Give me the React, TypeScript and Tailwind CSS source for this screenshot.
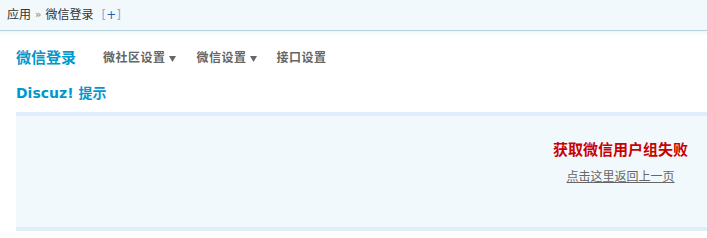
import React from "react";

const cjk = { fontFamily: '"DejaVu Sans", "Noto Sans CJK SC", sans-serif' };

function Arrow() {
  return (
    <svg width="7" height="6" viewBox="0 0 7 6" className="ml-[3px] mt-[1px]">
      <polygon points="0,0 7,0 3.5,6" fill="#666" />
    </svg>
  );
}

export default function App() {
  return (
    <div className="w-[707px] h-[238px] bg-white overflow-hidden" style={cjk}>
      <div className="h-[31px] bg-[#F2F9FD] border-b border-[#B7D2DC] flex items-center pl-[7px] text-[12px] text-[#333] leading-none">
        <span>应用</span>
        <span className="mx-[4px] text-[10px] text-[#B59B6B] font-bold">»</span>
        <span>微信登录</span>
        <span className="ml-[8px] text-[#2366A8]">
          <span className="text-[#99A4D8]">[</span>+<span className="text-[#99A4D8]">]</span>
        </span>
      </div>
      <div className="h-[5px] bg-gradient-to-b from-[#EEF6FA] to-white" />
      <div className="flex items-center pl-[16px] mt-[12px] h-[20px]">
        <span className="text-[15px] font-bold text-[#0099CC] leading-none">微信登录</span>
        <span className="ml-[27px] flex items-center text-[12px] tracking-[0.5px] font-bold text-[#666] leading-none">
          微社区设置<Arrow />
        </span>
        <span className="ml-[21px] flex items-center text-[12px] tracking-[0.5px] font-bold text-[#666] leading-none">
          微信设置<Arrow />
        </span>
        <span className="ml-[20px] text-[12px] tracking-[0.5px] font-bold text-[#666] leading-none">接口设置</span>
      </div>
      <div className="pl-[16px] mt-[15px] h-[20px] flex items-center text-[14px] font-bold text-[#0099CC] leading-none">
        Discuz! 提示
      </div>
      <div className="ml-[16px] mt-[9px] h-[119px] bg-[#F2F9FD] border-y-4 border-[#DEEEFA] flex justify-end pr-[19px]">
        <div className="flex flex-col items-center pt-[27px]">
          <div className="text-[15px] font-bold text-[#CC0000] leading-none">获取微信用户组失败</div>
          <div className="mt-[12px] text-[12px] text-[#666] underline leading-[15px]">点击这里返回上一页</div>
        </div>
      </div>
    </div>
  );
}
